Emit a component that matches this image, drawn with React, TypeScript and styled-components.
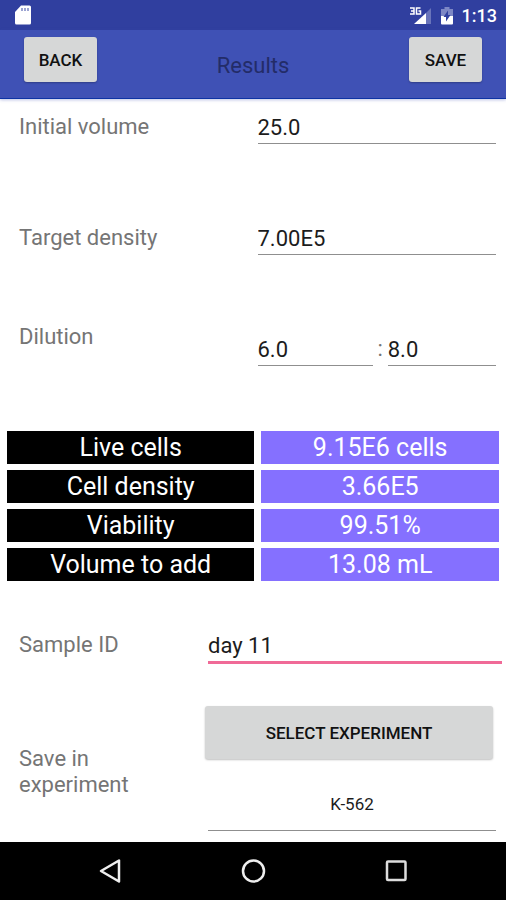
import React, { useState } from "react";
import styled, { createGlobalStyle } from "styled-components";

const GlobalStyle = createGlobalStyle`
  *, *::before, *::after { box-sizing: border-box; }
  body {
    margin: 0;
    background: #fff;
    font-family: Roboto, "Noto Sans", sans-serif;
  }
  button, input { font-family: inherit; }
`;

const Screen = styled.div`
  display: flex;
  flex-direction: column;
  min-height: 100vh;
`;

const StatusBar = styled.div`
  display: flex;
  align-items: center;
  justify-content: space-between;
  height: 30px;
  padding: 0 9px 0 14px;
  background: #303f9f;
  color: #fff;
`;

const StatusIcons = styled.div`
  display: flex;
  align-items: center;
  gap: 9px;
`;

const Clock = styled.time`
  font-size: 18px;
  font-weight: 500;
  line-height: 24px;
  padding-top: 2px;
`;

const AppBar = styled.header`
  display: grid;
  grid-template-columns: 1fr auto 1fr;
  height: 69px;
  padding: 7px 24px 0;
  background: #3f51b5;
  border-bottom: 1px solid #0d33a4;
  box-shadow: 0 1px 3px rgba(63, 81, 181, 0.35);
`;

const RaisedButton = styled.button<{ $end?: boolean; $wide?: boolean }>`
  justify-self: ${(p) => (p.$end ? "end" : "start")};
  width: ${(p) => (p.$wide ? "100%" : "73px")};
  height: ${(p) => (p.$wide ? "53px" : "45px")};
  padding: 0;
  border: 0;
  border-radius: 3px;
  background: #d6d7d7;
  box-shadow: 0 1px 2px rgba(0, 0, 0, 0.25);
  color: #111;
  font-size: 17px;
  font-weight: 500;
`;

const Title = styled.h1`
  margin: 0;
  padding-top: 15px;
  color: #232c68;
  font-size: 22px;
  font-weight: 400;
  line-height: 28px;
`;

const Content = styled.main`
  flex: 1;
  display: flex;
  flex-direction: column;
`;

const Row = styled.div<{ $gap: number; $narrow?: boolean; $bleed?: boolean }>`
  display: grid;
  grid-template-columns: ${(p) => (p.$narrow ? "189px 1fr" : "1fr 1fr")};
  align-items: start;
  margin-top: ${(p) => p.$gap}px;
  padding: 0 ${(p) => (p.$bleed ? 4 : 10)}px 0 19px;
`;

const Label = styled.label`
  max-width: 160px;
  color: #757575;
  font-size: 22px;
  line-height: 26px;
`;

const TextField = styled.input<{ $focused?: boolean; $small?: boolean }>`
  display: block;
  width: 100%;
  min-width: 0;
  height: ${(p) => (p.$small ? 42 : p.$focused ? 32 : 30)}px;
  padding: 0 0 ${(p) => (p.$small ? 12 : 3)}px;
  border: 0;
  border-bottom: ${(p) => (p.$focused ? "3px solid #f06a97" : "1px solid #8f8f8f")};
  border-radius: 0;
  outline: 0;
  background: transparent;
  color: #1c1c1c;
  font-size: ${(p) => (p.$small ? 17 : 22)}px;
  line-height: 26px;
  text-align: ${(p) => (p.$small ? "center" : "left")};
`;

const Ratio = styled.div`
  display: grid;
  grid-template-columns: 115fr 15px 108fr;
  align-items: start;
  padding-top: 12px;
`;

const Colon = styled.span`
  color: #757575;
  font-size: 22px;
  line-height: 26px;
  text-align: center;
`;

const Results = styled.table`
  width: 100%;
  margin-top: 59px;
  border-collapse: separate;
  border-spacing: 7px 6px;
  table-layout: fixed;
  color: #fff;
  font-size: 25px;
  line-height: 33px;
  text-align: center;
`;

const ResultName = styled.th`
  width: 51%;
  height: 33px;
  padding: 0;
  background: #000;
  font-weight: 400;
`;

const ResultValue = styled.td`
  height: 33px;
  padding: 0;
  background: #8570ff;
`;

const ExperimentLabel = styled(Label)`
  padding-top: 40px;
`;

const Picker = styled.div`
  display: flex;
  flex-direction: column;
  gap: 30px;
`;

const PickerAction = styled.div`
  margin: 0 3px 0 -3px;
`;

const NavBar = styled.nav`
  display: flex;
  justify-content: center;
  gap: 103px;
  height: 58px;
  margin-top: 10px;
  background: #000;
`;

const NavButton = styled.button`
  display: flex;
  align-items: center;
  justify-content: center;
  width: 40px;
  padding: 0;
  border: 0;
  background: transparent;
`;

const SdCard = () => (
  <svg width="19" height="22" viewBox="0 0 19 22" aria-hidden="true">
    <path d="M7 1.5h8.5a1.5 1.5 0 0 1 1.5 1.5v16a1.5 1.5 0 0 1-1.5 1.5h-13A1.5 1.5 0 0 1 1 19V8z" fill="#fff" />
    <path d="M8 4v3M11 4v3M14 4v3" stroke="#7c86c4" strokeWidth="1.5" />
  </svg>
);

const Signal = () => (
  <svg width="22" height="19" viewBox="0 0 22 19" aria-hidden="true">
    <path d="M21 2v16h-5V7z" fill="#6974ba" />
    <path d="M16 7v11H4z" fill="#fff" />
    <g fill="none" stroke="#fff" strokeWidth="1.5">
      <path d="M0 2h4v6H0M1 5h3" />
      <path d="M10.5 2H6.500V8h4V5H8.500" />
    </g>
  </svg>
);

const Battery = () => (
  <svg width="12" height="19" viewBox="0 0 12 19" aria-hidden="true">
    <path d="M3.5 1h5v2H12v8H0V3h3.5z" fill="#7d87c5" />
    <path d="M0 10h12v7.5a1 1 0 0 1-1 1H1a1 1 0 0 1-1-1z" fill="#fff" />
    <path d="M7 4.5L2.5 11H5v4.5L9.500 9H7z" fill="#303f9f" />
  </svg>
);

const results = [
  ["Live cells", "9.15E6 cells"],
  ["Cell density", "3.66E5"],
  ["Viability", "99.51%"],
  ["Volume to add", "13.08 mL"],
];

export default function App() {
  const [values, setValues] = useState({
    volume: "25.0",
    density: "7.00E5",
    from: "6.0",
    to: "8.0",
    sample: "day 11",
    experiment: "K-562",
  });
  const bind = (key: keyof typeof values) => ({
    id: key,
    value: values[key],
    onChange: (e: React.ChangeEvent<HTMLInputElement>) =>
      setValues({ ...values, [key]: e.target.value }),
  });

  return (
    <Screen>
      <GlobalStyle />
      <StatusBar>
        <SdCard />
        <StatusIcons>
          <Signal />
          <Battery />
          <Clock>1:13</Clock>
        </StatusIcons>
      </StatusBar>
      <AppBar>
        <RaisedButton type="button">BACK</RaisedButton>
        <Title>Results</Title>
        <RaisedButton type="button" $end>SAVE</RaisedButton>
      </AppBar>
      <Content>
        <Row $gap={15}>
          <Label htmlFor="volume">Initial volume</Label>
          <TextField {...bind("volume")} />
        </Row>
        <Row $gap={81}>
          <Label htmlFor="density">Target density</Label>
          <TextField {...bind("density")} />
        </Row>
        <Row $gap={69}>
          <Label htmlFor="from">Dilution</Label>
          <Ratio>
            <TextField {...bind("from")} />
            <Colon>:</Colon>
            <TextField {...bind("to")} aria-label="Dilution to" />
          </Ratio>
        </Row>
        <Results>
          <tbody>
            {results.map(([name, value]) => (
              <tr key={name}>
                <ResultName scope="row">{name}</ResultName>
                <ResultValue>{value}</ResultValue>
              </tr>
            ))}
          </tbody>
        </Results>
        <Row $gap={45} $narrow $bleed>
          <Label htmlFor="sample">Sample ID</Label>
          <TextField {...bind("sample")} $focused />
        </Row>
        <Row $gap={42} $narrow>
          <ExperimentLabel htmlFor="experiment">Save in experiment</ExperimentLabel>
          <Picker>
            <PickerAction>
              <RaisedButton type="button" $wide>SELECT EXPERIMENT</RaisedButton>
            </PickerAction>
            <TextField {...bind("experiment")} $small />
          </Picker>
        </Row>
      </Content>
      <NavBar>
        <NavButton type="button" aria-label="Back">
          <svg width="24" height="26" viewBox="0 0 24 26">
            <path d="M21 2.5v21L3 13z" fill="none" stroke="#eee" strokeWidth="2.5" strokeLinejoin="round" />
          </svg>
        </NavButton>
        <NavButton type="button" aria-label="Home">
          <svg width="26" height="26" viewBox="0 0 26 26">
            <circle cx="13.5" cy="13" r="10.5" fill="none" stroke="#eee" strokeWidth="2.5" />
          </svg>
        </NavButton>
        <NavButton type="button" aria-label="Recent apps">
          <svg width="24" height="24" viewBox="0 0 24 24">
            <rect x="3" y="2.5" width="18.5" height="18.5" rx="1" fill="none" stroke="#ddd" strokeWidth="2.5" />
          </svg>
        </NavButton>
      </NavBar>
    </Screen>
  );
}
